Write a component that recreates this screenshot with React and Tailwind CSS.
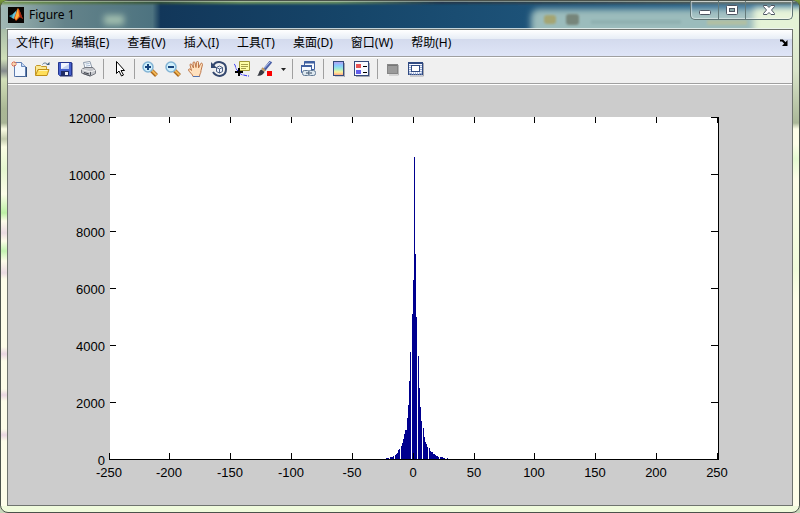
const MENUS = ["文件(F)", "编辑(E)", "查看(V)", "插入(I)", "工具(T)", "桌面(D)", "窗口(W)", "帮助(H)"];

/* Histogram columns: one height per pixel column, starting at x = 386. */
const BARS_START = 386;
const BARS = [
  1, 1, 1, 0, 2, 2, 2, 3, 0, 4, 5, 6, 9, 10, 0, 13, 16, 20, 25, 29, 29, 41, 54, 78, 107, 0,
  145, 179, 302, 205, 142, 0, 103, 71, 52, 38, 0, 31, 22, 17, 15, 12, 0, 11, 8, 7, 7, 5, 5,
  4, 3, 3, 2, 0, 2, 2, 2, 1, 1, 0, 0, 1,
];

const X_TICKS = [-250, -200, -150, -100, -50, 0, 50, 100, 150, 200, 250];
const Y_TICKS = [0, 2000, 4000, 6000, 8000, 10000, 12000];
const BASE = 459;

const xPos = (v) => Math.min(717, Math.max(109, Math.floor(413.1 + (v / 50) * 60.9)));
const yPos = (v) => BASE - (v / 2000) * 57;

function Icon({ children, size = 16 }) {
  return (
    <svg width={size} height={size} viewBox="0 0 16 16" fill="none" aria-hidden="true">
      {children}
    </svg>
  );
}

function NewIcon() {
  return (
    <Icon>
      <path d="M3.5 1.5h7l4 4v10h-11z" fill="#f1f7ff" stroke="#5f7db0" />
      <path d="M10.5 1.5v4h4" fill="#c5d8f3" stroke="#6b8bbd" />
      <path d="M15.5 6v10H5" stroke="#31507f" />
      <path d="M3 0v6M0 3h6M1 1l4 4M5 1L1 5" stroke="#e37350" />
      <rect x="2" y="2" width="2" height="2" fill="#ffd9a0" />
    </Icon>
  );
}

function OpenIcon() {
  return (
    <Icon>
      <path d="M1.5 14V5.5l1-1h4l1 1h5v3" fill="#fbe894" stroke="#c49727" />
      <path d="M1.5 14.5l2.5-6h11l-2 6z" fill="#ffdf5a" stroke="#bf8e17" />
      <path d="M5 9.5h8.5" stroke="#fff4b5" />
      <path d="M8.5 3.5c1-2 4-2 5 0" stroke="#5a7690" />
      <path d="M12 4h3.5V1z" fill="#405d7c" />
    </Icon>
  );
}

function SaveIcon() {
  return (
    <Icon>
      <path d="M1.5 1.5h13v13h-12l-1-1z" fill="#4661cd" stroke="#25368f" />
      <path d="M15.5 2v13.5H3" stroke="#8a8fb0" />
      <rect x="4" y="2" width="8" height="6" fill="#f1f5ff" />
      <path d="M4 8l8-5v5z" fill="#c4d2f2" />
      <rect x="4" y="10" width="8" height="5" fill="#202c65" />
      <rect x="8" y="11" width="3" height="3" fill="#f0f1f8" />
    </Icon>
  );
}

function PrintIcon() {
  return (
    <Icon>
      <path d="M5 7L3.5 1.5 10 .5 12 7z" fill="#fbfdff" stroke="#8d9aab" />
      <path d="M5.5 3l4-.5M6 5l4-.5" stroke="#a6b9d1" />
      <path d="M1.5 8.5L5 6.5h8l2.5 3v3l-5 2.500-9-3z" fill="#c4c6cb" stroke="#777a82" />
      <path d="M1.5 8.5l9 2.500 5-2" stroke="#f2f2f2" />
      <path d="M10.5 11v3.500M3 12.5l7 2.500" stroke="#555962" />
      <path d="M4 11.5l5 1.500" stroke="#3d4149" />
    </Icon>
  );
}

function PointerIcon() {
  return (
    <Icon>
      <path d="M5.500.5v12l2.500-2.500 2.500 5 2-1-2.500-4.500h3.500z" fill="#fff" stroke="#000" />
    </Icon>
  );
}

function ZoomIcon({ plus }) {
  return (
    <Icon>
      <path d="M9.5 9.5l5 5" stroke="#a96619" strokeWidth="4" />
      <path d="M9.5 9l5 5" stroke="#f2b654" strokeWidth="2" />
      <circle cx="6" cy="6" r="5" fill="#d0f0fb" stroke="#83b4d5" strokeWidth="1.5" />
      <path d="M3 6h6" stroke="#17437d" strokeWidth="2" />
      {plus && <path d="M6 3v6" stroke="#17437d" strokeWidth="2" />}
    </Icon>
  );
}

function HandIcon() {
  return (
    <Icon>
      <path
        d="M5 15.5c0-2-4-4.500-4.500-6.500 0-1.500 1.500-1.500 3 .5L2 4c0-1.500 1.500-1.500 2 0l1.500 3L5 2c0-1.500 2-1.500 2 0l1 4.500.5-5c0-1.500 2-1.500 2 0V7l2-4c.5-1.500 2-1 2 .5L13 9.500c0 3-1.500 3.500-1.500 6z"
        fill="#ffe1be"
        stroke="#bd7547"
      />
      <path d="M5 15.5h6.500" stroke="#5373b0" />
    </Icon>
  );
}

function RotateIcon() {
  return (
    <Icon>
      <path d="M2 5C5-1 15 0 15 8s-9 9-13 3" stroke="#34486f" strokeWidth="2" />
      <path d="M0 1v6h6z" fill="#34486f" />
      <path d="M5.500 6.500l3-1.500 3 1.500v4L8.500 12l-3-1.500zM5.500 6.500l3 1.500 3-1.500M8.500 8v4" fill="#eef3ff" stroke="#4b6084" />
    </Icon>
  );
}

function DataCursorIcon() {
  return (
    <Icon>
      <path d="M0 3c2 1 1 4 3 6s4 5 6 5 3 1 6 1" stroke="#2524ef" strokeDasharray="4 1" />
      <path d="M5.500.5h10v9h-10z" fill="#ffffa6" stroke="#a29a38" />
      <path d="M7 3.500h7M7 5.500h7M7 7.500h5" stroke="#a8a04a" />
      <path d="M1 11h8M5 7v8" stroke="#000" strokeWidth="2" />
    </Icon>
  );
}

function BrushIcon() {
  return (
    <Icon>
      <path d="M7 9l7-8.500" stroke="#4a5fa5" strokeWidth="3" />
      <path d="M7 7.500L13.500.5" stroke="#bccaf3" />
      <path d="M5 7l3 3" stroke="#c29b60" strokeWidth="2" />
      <path d="M0 14.500c2 0 1.500-5 4.500-6l3 2.500C6 14 3 15.500 0 14.500z" fill="#383b43" />
      <rect x="10" y="10" width="5" height="5" fill="#fb0000" />
    </Icon>
  );
}

function LinkIcon() {
  return (
    <Icon>
      <path d="M4.500.5h10v8h-10z" fill="#f8fbff" stroke="#4060a0" />
      <path d="M4 1.500h11" stroke="#4060a0" strokeWidth="2" />
      <path d="M1.500 4.500h10v7h-10z" fill="#f8fbff" stroke="#4060a0" />
      <path d="M1 5h11" stroke="#4060a0" strokeWidth="2" />
      <rect x="2.500" y="9.500" width="7" height="5" rx="2" fill="#dce7ef" stroke="#607994" />
      <rect x="8.500" y="9.500" width="7" height="5" rx="2" fill="#dce7ef" stroke="#607994" />
      <path d="M6 12h6" stroke="#33475f" />
    </Icon>
  );
}

function ColorbarIcon() {
  return (
    <Icon>
      <defs>
        <linearGradient id="colorbar" x1="0" y1="0" x2="0" y2="1">
          <stop offset="0" stopColor="#b79df0" />
          <stop offset=".3" stopColor="#86cfff" />
          <stop offset=".55" stopColor="#a4eed0" />
          <stop offset=".75" stopColor="#fbf39b" />
          <stop offset="1" stopColor="#ff9b84" />
        </linearGradient>
      </defs>
      <path d="M13.500 2v14H4" stroke="#a5a7b0" />
      <rect x="2.500" y=".5" width="10" height="14" fill="url(#colorbar)" stroke="#354a7b" />
    </Icon>
  );
}

function LegendIcon() {
  return (
    <Icon>
      <path d="M15.500 2v13.500H2" stroke="#a5a7b0" />
      <rect x=".5" y=".5" width="14" height="14" fill="#f9faff" stroke="#354a7b" />
      <rect x="2" y="3" width="5" height="4" fill="#e85454" />
      <rect x="2" y="9" width="5" height="4" fill="#625eea" />
      <path d="M9 5.500h4M9 11.500h4" stroke="#000" />
    </Icon>
  );
}

function HidePlotIcon() {
  return (
    <Icon>
      <path d="M13.500 4v10H4" stroke="#b9b9b9" />
      <rect x="2.500" y="3.500" width="10" height="9" fill="#9b9b9b" stroke="#868686" />
      <path d="M3 4.500h9" stroke="#777" />
    </Icon>
  );
}

function ShowPlotIcon() {
  return (
    <Icon>
      <path d="M15.500 2v13H2" stroke="#a5a7b0" />
      <rect x=".5" y="1.500" width="14" height="12" fill="#f6f8ff" stroke="#304a82" />
      <path d="M0 2h15" stroke="#304a82" strokeWidth="2" />
      <path d="M2 4v9M13 4v9M1 12.500h13" stroke="#97aad0" strokeDasharray="1 1" strokeWidth="2" />
      <rect x="3.500" y="4.500" width="8" height="6" fill="#fff" stroke="#304a82" />
    </Icon>
  );
}

function ToolButton({ label, children }) {
  return (
    <button type="button" aria-label={label} className="flex h-[22px] w-[23px] items-center justify-center pr-px hover:bg-white">
      {children}
    </button>
  );
}

function Separator() {
  return (
    <span className="flex w-2 justify-center pr-px">
      <span className="h-5 w-px bg-[#a0a0a0]" />
    </span>
  );
}

/* Blurred desktop seen through the glass title bar. */
function Glass() {
  return (
    <svg className="absolute inset-0 h-full w-full" viewBox="0 0 798 28" preserveAspectRatio="none" aria-hidden="true">
      <defs>
        <linearGradient id="sea" x1="0" y1="0" x2="1" y2="0">
          <stop offset="0" stopColor="#a2b9b5" />
          <stop offset=".08" stopColor="#64838a" />
          <stop offset=".19" stopColor="#4d7380" />
          <stop offset=".2" stopColor="#12375a" />
          <stop offset=".45" stopColor="#16466a" />
          <stop offset="1" stopColor="#28668f" />
        </linearGradient>
        <linearGradient id="topShade" x1="0" y1="0" x2="1" y2="0">
          <stop offset="0" stopColor="#759851" />
          <stop offset=".2" stopColor="#35513b" />
          <stop offset=".3" stopColor="#6d925e" />
          <stop offset=".42" stopColor="#658b61" />
          <stop offset=".55" stopColor="#20364a" />
          <stop offset="1" stopColor="#5b665b" />
        </linearGradient>
        <filter id="soft" x="-20%" y="-60%" width="140%" height="220%">
          <feGaussianBlur stdDeviation="3" />
        </filter>
        <filter id="edge" x="-20%" y="-100%" width="140%" height="300%">
          <feGaussianBlur stdDeviation="1" />
        </filter>
      </defs>
      <rect width="798" height="28" fill="url(#sea)" />
      <g filter="url(#soft)">
        <rect x="103" y="14" width="20" height="10" fill="#a0bdae" />
        <rect x="530" y="8" width="290" height="30" rx="8" fill="#9bbcbc" />
        <rect x="753" y="6" width="60" height="30" fill="#e4f3d6" />
      </g>
      <g filter="url(#edge)">
        <rect x="543" y="14" width="12" height="9" rx="3" fill="#a4a572" />
        <rect x="565" y="13" width="13" height="11" rx="3" fill="#76857a" />
        <rect x="590" y="19" width="90" height="4" fill="#90b1b1" />
        <rect x="706" y="19" width="40" height="5" fill="#b0c0a4" />
      </g>
      <rect y="-2" width="798" height="5" fill="url(#topShade)" filter="url(#edge)" />
      <path d="M0 .5h798" stroke="#d4dfcf" strokeOpacity=".5" />
      <path d="M5 27.500h788" stroke="#eef5f2" strokeOpacity=".8" />
    </svg>
  );
}

function TitleBar() {
  return (
    <header className="relative flex h-7 items-start justify-between overflow-hidden rounded-t-md pr-[6px] pl-[7px]">
      <Glass />
      <div className="relative flex h-7 items-center gap-[5px]">
        <svg width="16" height="16" viewBox="0 0 16 16" aria-hidden="true">
          <rect width="16" height="16" fill="#080503" />
          <path d="M1 9l4-2 3-3 2-3-3 8-3 2z" fill="#2686a4" />
          <path d="M5 7l3-3 1 4-3 4-2-1z" fill="#67c1d4" />
          <path d="M10 1c2 2 3 7 5 11l-3-2-4 4-2-3z" fill="#dd4c15" />
          <path d="M10 1l1 8-3 4-1-2z" fill="#ffb13b" />
          <path d="M11 2l4 10-3-2z" fill="#9f2613" />
        </svg>
        <h1 className="text-[12px] leading-4 text-black">Figure 1</h1>
      </div>
      <div className="relative flex h-[19px] w-[103px] rounded-b-[5px] border border-t-0 border-[#5f7474] bg-white/10 inset-shadow-[0_0_1px_1px_rgba(255,255,255,0.5)]">
        <button type="button" aria-label="Minimize" className="flex w-7 items-center justify-center border-r border-[#647a7b]">
          <svg width="14" height="14" viewBox="0 0 14 14" aria-hidden="true">
            <rect x="1.500" y="7.500" width="11" height="4" rx="1" fill="#fff" stroke="#4d5562" />
          </svg>
        </button>
        <button type="button" aria-label="Maximize" className="flex w-[27px] items-center justify-center border-r border-[#647a7b]">
          <svg width="14" height="14" viewBox="0 0 14 14" aria-hidden="true">
            <rect x="1.500" y="2.500" width="11" height="9" rx="1" fill="#fff" stroke="#4d5562" />
            <rect x="4.500" y="5.500" width="5" height="3" fill="#8cacaa" stroke="#4d5562" />
          </svg>
        </button>
        <button type="button" aria-label="Close" className="flex flex-1 items-center justify-center">
          <svg width="14" height="14" viewBox="0 0 14 14" aria-hidden="true">
            <path
              d="M1.500 2.500h3.500l2 2 2-2h3.500v1L9.500 7l3 3.500v1H9l-2-2-2 2H1.500v-1l3-3.500-3-3.500z"
              fill="#fff"
              stroke="#4d5562"
            />
          </svg>
        </button>
      </div>
    </header>
  );
}

function MenuBar() {
  return (
    <nav className="flex h-[27px] items-center justify-between border-b border-[#a0a0a0] bg-[linear-gradient(#ffffff_0px,#e7edf6_9px,#d3daed_9px,#dfe5f7_26px)] pr-1">
      <div className="flex gap-0.5">
        {MENUS.map((m) => (
          <button key={m} type="button" className="px-2 text-[12px] leading-5 whitespace-nowrap text-black">
            {m}
          </button>
        ))}
      </div>
      <button type="button" aria-label="Dock figure">
        <svg width="8" height="8" viewBox="0 0 8 8" aria-hidden="true">
          <path d="M0 1.500h2.500L6 5" fill="none" stroke="#000" strokeWidth="2" />
          <path d="M7.500 1v6H2z" fill="#000" />
        </svg>
      </button>
    </nav>
  );
}

function Toolbar() {
  return (
    <div role="toolbar" className="border-t border-b border-t-white border-b-[#a0a0a0] bg-[#f0f0f0] pb-[3px]">
      <div className="flex items-center">
        <ToolButton label="New figure"><NewIcon /></ToolButton>
        <ToolButton label="Open"><OpenIcon /></ToolButton>
        <ToolButton label="Save"><SaveIcon /></ToolButton>
        <ToolButton label="Print"><PrintIcon /></ToolButton>
        <Separator />
        <ToolButton label="Edit plot"><PointerIcon /></ToolButton>
        <Separator />
        <ToolButton label="Zoom in"><ZoomIcon plus /></ToolButton>
        <ToolButton label="Zoom out"><ZoomIcon /></ToolButton>
        <ToolButton label="Pan"><HandIcon /></ToolButton>
        <ToolButton label="Rotate 3D"><RotateIcon /></ToolButton>
        <ToolButton label="Data cursor"><DataCursorIcon /></ToolButton>
        <ToolButton label="Brush"><BrushIcon /></ToolButton>
        <button type="button" aria-label="Brush colours" className="flex h-[22px] w-3 items-center justify-center">
          <svg width="5" height="3" viewBox="0 0 5 3" aria-hidden="true">
            <path d="M0 0h5L2.500 3z" fill="#222" />
          </svg>
        </button>
        <Separator />
        <ToolButton label="Link plot"><LinkIcon /></ToolButton>
        <Separator />
        <ToolButton label="Insert colorbar"><ColorbarIcon /></ToolButton>
        <ToolButton label="Insert legend"><LegendIcon /></ToolButton>
        <Separator />
        <ToolButton label="Hide plot tools"><HidePlotIcon /></ToolButton>
        <ToolButton label="Show plot tools"><ShowPlotIcon /></ToolButton>
      </div>
    </div>
  );
}

function Histogram() {
  return (
    <svg viewBox="8 85 784 420" className="block w-full" role="img" aria-label="Histogram">
      <g shapeRendering="crispEdges">
        <rect x="110" y="117" width="608" height="342" fill="#fff" />
        {BARS.map((h, i) => (
          <rect key={i} x={BARS_START + i} y={BASE - h} width="1" height={h} fill="#00008f" />
        ))}
        <rect x="109" y={BASE} width="610" height="1" />
        <rect x="718" y="117" width="1" height="343" />
        {X_TICKS.map((v) => (
          <g key={v}>
            <rect x={xPos(v)} y="117" width="1" height="6" />
            <rect x={xPos(v)} y="453" width="1" height="6" />
          </g>
        ))}
        {Y_TICKS.map((v) => (
          <g key={v}>
            <rect x="110" y={yPos(v)} width="6" height="1" />
            <rect x="711" y={yPos(v)} width="7" height="1" />
          </g>
        ))}
      </g>
      <g className="font-['Liberation_Sans',sans-serif] text-[13px]">
        {Y_TICKS.map((v) => (
          <text key={v} x="105" y={yPos(v) + 6} textAnchor="end">{v}</text>
        ))}
        {X_TICKS.map((v) => (
          <text key={v} x={xPos(v)} y="477" textAnchor="middle">{v}</text>
        ))}
      </g>
    </svg>
  );
}

export default function App() {
  return (
    <div className="min-h-screen bg-[linear-gradient(#7d9d3c,#2d3a2c_12px,#c9d6ba_100%)] font-['Noto_Sans','Noto_Sans_CJK_SC',sans-serif]">
      <div className="flex min-h-screen flex-col rounded-lg border border-[#4b524b] bg-[#f0fbdc]">
        <TitleBar />
        <div className="flex flex-1">
          {/* left glass edge */}
          <div className="w-[6px] bg-[linear-gradient(#a9bda9_0px,#d0dfb9_30px,#858b8c_42px,#d2dfb8_50px,#aab795_80px,#a9b596_94px,#fbfde4_100px,#c3cbad_110px,#fbfde4_118px,#e5f7cf_140px,#fdfde9_165px,#bcf0a4_184px,#fdfde9_192px,#eadbe2_204px,#fdfde9_212px,#c3f3b0_222px,#fdfde9_232px,#eadbe2_244px,#fdfde9_250px,#fdfde9_318px,#e9d6e2_325px,#fdfde9_332px,#fdfde9_360px,#e9d6e2_366px,#fdfde9_372px,#fdfde9_400px,#e9d6e2_406px,#fdfde9_412px)]" />
          <main className="flex min-w-0 flex-1 flex-col border border-[#6f746f] bg-[#cccccc]">
            <MenuBar />
            <Toolbar />
            <div className="flex-1 border-t border-white">
              <Histogram />
            </div>
          </main>
          {/* right glass edge */}
          <div className="w-[6px] bg-[linear-gradient(#e4f1d5_0px,#dbe6cb_40px,#aab798_94px,#fefee9_100px,#fefee9_115px,#e6fad2_130px,#fefee9_150px,#f1fcdb_240px,#fefee9_270px)]" />
        </div>
        <div className="h-[6px]" />
      </div>
    </div>
  );
}
